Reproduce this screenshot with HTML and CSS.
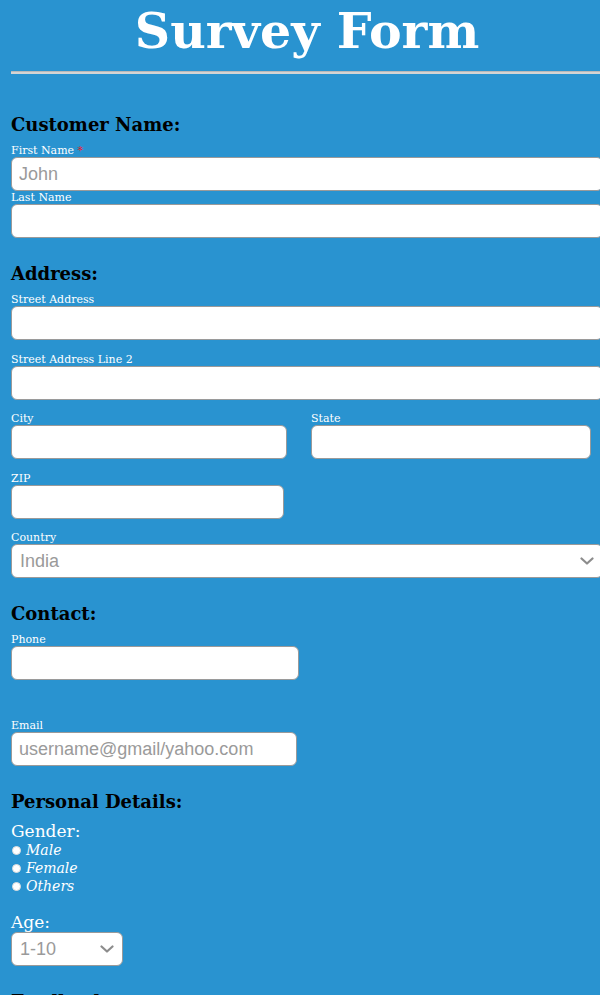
FILE: index.html
```html
<!DOCTYPE html>
<html lang="en">
<head>
<meta charset="utf-8">
<title>Survey Form</title>
<link rel="stylesheet" href="styles.css">
</head>
<body>
<div class="page">
  <h1 class="title">Survey Form</h1>
  <hr class="rule">
  <form class="form">
    <section class="section first">
      <h2 class="heading">Customer Name:</h2>
      <label class="label">First Name <span class="req">*</span></label>
      <input class="field" type="text" placeholder="John">
      <label class="label">Last Name</label>
      <input class="field" type="text">
    </section>

    <section class="section">
      <h2 class="heading">Address:</h2>
      <div class="group">
        <label class="label">Street Address</label>
        <input class="field" type="text">
      </div>
      <div class="group">
        <label class="label">Street Address Line 2</label>
        <input class="field" type="text">
      </div>
      <div class="group row">
        <div class="col col-city">
          <label class="label">City</label>
          <input class="field" type="text">
        </div>
        <div class="col col-state">
          <label class="label">State</label>
          <input class="field" type="text">
        </div>
      </div>
      <div class="group">
        <label class="label">ZIP</label>
        <input class="field w-zip" type="text">
      </div>
      <div class="group">
        <label class="label">Country</label>
        <div class="select-wrap">
          <select class="field select">
            <option>India</option>
          </select>
          <svg class="chev" width="14" height="8" viewBox="0 0 14 8"><path d="M1.5 1.5 L7 6.5 L12.5 1.5" fill="none" stroke="#8c8c8c" stroke-width="2.2" stroke-linecap="round" stroke-linejoin="round"/></svg>
        </div>
      </div>
    </section>

    <section class="section">
      <h2 class="heading">Contact:</h2>
      <label class="label">Phone</label>
      <input class="field w-phone" type="tel">
      <div class="spacer"></div>
      <label class="label">Email</label>
      <input class="field w-email" type="email" placeholder="username@gmail/yahoo.com">
    </section>

    <section class="section">
      <h2 class="heading">Personal Details:</h2>
      <div class="sub">Gender:</div>
      <label class="radio"><input type="radio" name="g" class="dot"><span>Male</span></label>
      <label class="radio"><input type="radio" name="g" class="dot"><span>Female</span></label>
      <label class="radio"><input type="radio" name="g" class="dot"><span>Others</span></label>
      <div class="sub age">Age:</div>
      <div class="select-wrap w-age">
        <select class="field select">
          <option>1-10</option>
        </select>
        <svg class="chev" width="14" height="8" viewBox="0 0 14 8"><path d="M1.5 1.5 L7 6.5 L12.5 1.5" fill="none" stroke="#8c8c8c" stroke-width="2.2" stroke-linecap="round" stroke-linejoin="round"/></svg>
      </div>
    </section>

    <section class="section last">
      <h2 class="heading">Feedback:</h2>
    </section>
  </form>
</div>
</body>
</html>
```

FILE: styles.css
```css
html, body {
  margin: 0;
  padding: 0;
  background: #2993d0;
  overflow-x: hidden;
}

body {
  font-family: "DejaVu Serif", serif;
}

.page {
  width: 592px;
  padding-left: 11px;
}

.title {
  margin: 0;
  height: 62px;
  line-height: 62px;
  font-size: 49px;
  font-weight: bold;
  color: #ffffff;
  text-align: center;
}

.rule {
  margin: 10px 0 0;
  border: 0;
  height: 2px;
  background: #d4d4d4;
  box-shadow: 0 -1px 0 #b9b9b9;
  width: 600px;
}

.form {
  display: block;
}

.section {
  display: flex;
  flex-direction: column;
  align-items: flex-start;
}

.heading {
  margin: 25px 0 8px;
  font-size: 18px;
  line-height: 22px;
  font-weight: bold;
  color: #000;
}

.first .heading {
  margin-top: 40px;
}

.last .heading {
  margin-top: 25px;
}

.label {
  display: block;
  font-size: 11px;
  line-height: 13px;
  color: #fff;
}

.req {
  color: #e8202a;
}

.field {
  box-sizing: border-box;
  width: 592px;
  height: 34px;
  margin: 0;
  border: 1.5px solid #9a9a9a;
  border-radius: 6px;
  background: #fff;
  padding: 0 7px;
  font-family: "Liberation Sans", Arial, sans-serif;
  font-size: 18px;
  color: #333;
}

.field::placeholder {
  color: #9a9a9a;
}

.group + .group {
  margin-top: 12.5px;
}

.row {
  display: flex;
  gap: 24px;
}

.col-city .field { width: 276px; }
.col-state .field { width: 280px; }
.w-zip { width: 273px; }
.w-phone { width: 288px; }
.w-email { width: 286px; }

.select-wrap {
  position: relative;
  width: 592px;
}

.select-wrap.w-age {
  width: 112px;
}

.select-wrap .field {
  width: 100%;
}

.select {
  appearance: none;
  -webkit-appearance: none;
  color: #9a9a9a;
  padding-left: 8px;
}

.chev {
  position: absolute;
  right: 9px;
  top: 13px;
  pointer-events: none;
}

.spacer {
  height: 39px;
}

.sub {
  font-size: 17px;
  line-height: 20px;
  color: #fff;
}

.radio {
  display: flex;
  align-items: center;
  gap: 5px;
  height: 18px;
  font-size: 14px;
  font-style: italic;
  color: #fff;
}

.dot {
  appearance: none;
  -webkit-appearance: none;
  margin: 0 0 0 1px;
  width: 9px;
  height: 9px;
  border-radius: 50%;
  background: #fff;
  border: 1px solid #ddd;
}

.age {
  margin-top: 17px;
}
```
